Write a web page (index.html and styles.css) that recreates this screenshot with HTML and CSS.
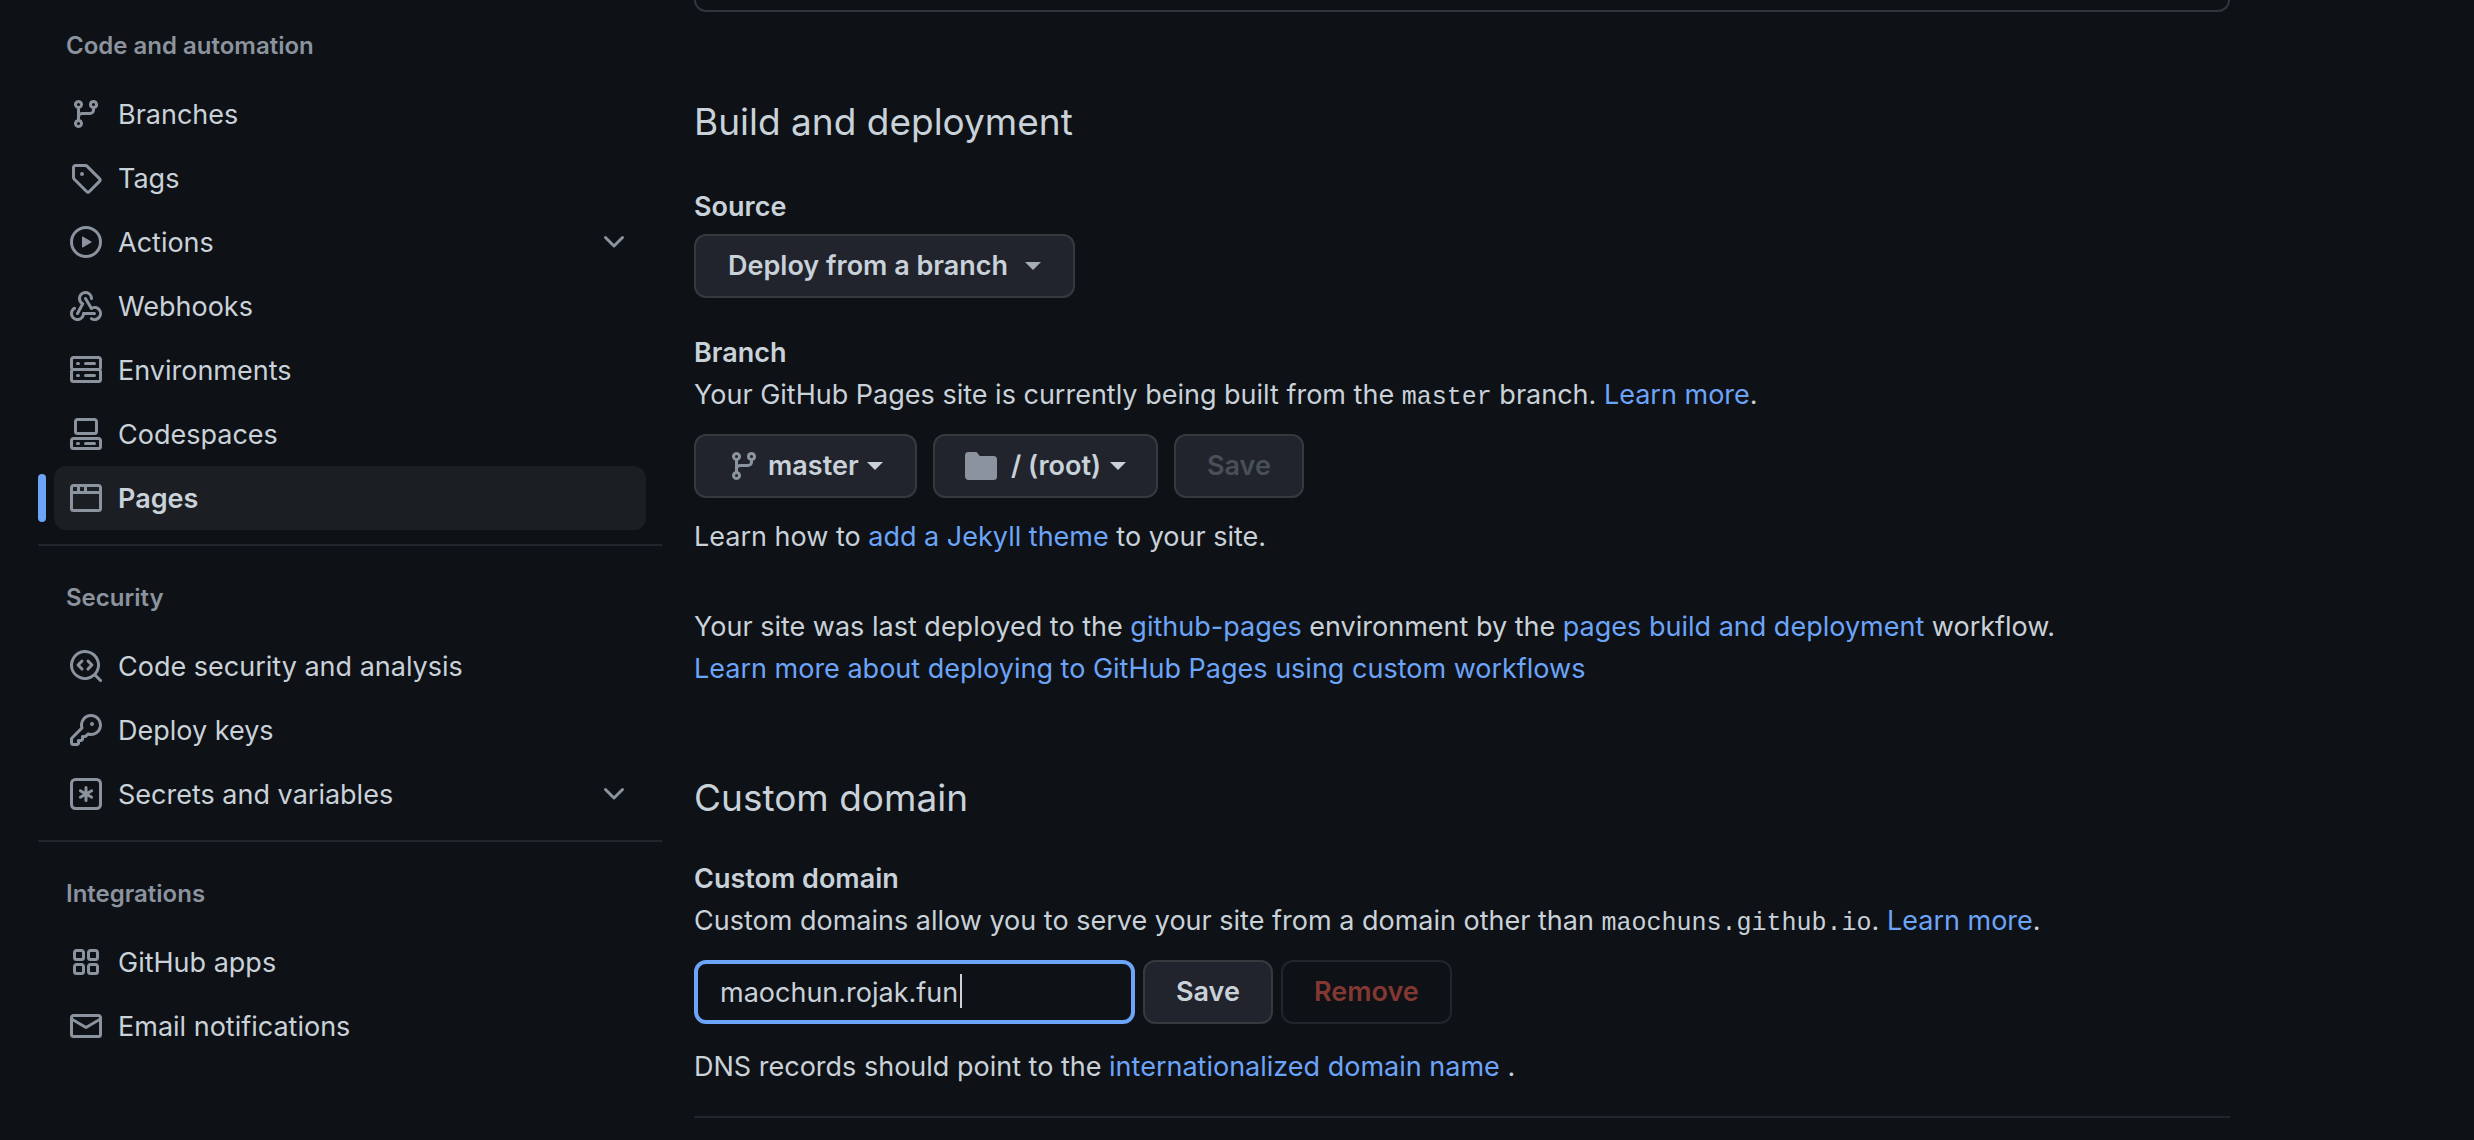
FILE: index.html
```html
<!DOCTYPE html>
<html lang="en">
<head>
<meta charset="utf-8">
<meta name="viewport" content="width=device-width, initial-scale=1">
<title>Pages settings</title>
<link rel="stylesheet" href="styles.css">
</head>
<body>
<svg class="sprite" aria-hidden="true">
  <symbol id="git-branch" viewBox="0 0 16 16"><path d="M9.5 3.25a2.25 2.25 0 1 1 3 2.122V6A2.5 2.5 0 0 1 10 8.5H6a1 1 0 0 0-1 1v1.128a2.251 2.251 0 1 1-1.5 0V5.372a2.25 2.25 0 1 1 1.5 0v1.836A2.493 2.493 0 0 1 6 7h4a1 1 0 0 0 1-1v-.628A2.25 2.25 0 0 1 9.5 3.25Zm-6 0a.75.75 0 1 0 1.5 0 .75.75 0 0 0-1.5 0Zm8.25-.75a.75.75 0 1 0 0 1.5.75.75 0 0 0 0-1.5ZM4.25 12a.75.75 0 1 0 0 1.5.75.75 0 0 0 0-1.5Z"/></symbol>
  <symbol id="tag" viewBox="0 0 16 16"><path d="M1 7.775V2.75C1 1.784 1.784 1 2.75 1h5.025c.464 0 .91.184 1.238.513l6.25 6.25a1.75 1.75 0 0 1 0 2.474l-5.026 5.026a1.75 1.75 0 0 1-2.474 0l-6.25-6.25A1.752 1.752 0 0 1 1 7.775Zm1.5 0c0 .066.026.13.073.177l6.25 6.25a.25.25 0 0 0 .354 0l5.025-5.025a.25.25 0 0 0 0-.354l-6.25-6.25a.25.25 0 0 0-.177-.073H2.75a.25.25 0 0 0-.25.25ZM6 5a1 1 0 1 1 0 2 1 1 0 0 1 0-2Z"/></symbol>
  <symbol id="play" viewBox="0 0 16 16"><path d="M8 0a8 8 0 1 1 0 16A8 8 0 0 1 8 0ZM1.5 8a6.5 6.5 0 1 0 13 0 6.5 6.5 0 0 0-13 0Zm4.879-2.773 4.264 2.559a.25.25 0 0 1 0 .428l-4.264 2.559A.25.25 0 0 1 6 10.559V5.442a.25.25 0 0 1 .379-.215Z"/></symbol>
  <symbol id="webhook" viewBox="0 0 16 16"><path d="M5.5 4.25a2.25 2.25 0 0 1 4.5 0 .75.75 0 0 0 1.5 0 3.75 3.75 0 1 0-6.14 2.889l-2.272 4.258a.75.75 0 0 0 1.324.706L7 7.25a.75.75 0 0 0-.309-1.015A2.25 2.25 0 0 1 5.5 4.25Z"/><path d="M7.364 3.607a.75.75 0 0 1 1.03.257l2.608 4.349a3.75 3.75 0 1 1-.628 6.785.75.75 0 0 1 .752-1.299 2.25 2.25 0 1 0-.033-3.88.75.75 0 0 1-1.03-.256L7.107 4.636a.75.75 0 0 1 .257-1.03Z"/><path d="M2.9 8.776A.75.75 0 0 1 2.625 9.8 2.25 2.25 0 1 0 6 11.75a.75.75 0 0 1 .75-.751h5.5a.75.75 0 0 1 0 1.5H7.425a3.751 3.751 0 1 1-5.55-3.998.75.75 0 0 1 1.024.274Z"/></symbol>
  <symbol id="server" viewBox="0 0 16 16"><path d="M1.75 1h12.5c.966 0 1.75.784 1.75 1.75v4c0 .372-.116.717-.314 1 .198.283.314.628.314 1v4a1.75 1.75 0 0 1-1.75 1.75H1.75A1.75 1.75 0 0 1 0 12.75v-4c0-.358.109-.707.314-1a1.739 1.739 0 0 1-.314-1v-4C0 1.784.784 1 1.75 1ZM1.5 2.75v4c0 .138.112.25.25.25h12.5a.25.25 0 0 0 .25-.25v-4a.25.25 0 0 0-.25-.25H1.75a.25.25 0 0 0-.25.25Zm.25 5.75a.25.25 0 0 0-.25.25v4c0 .138.112.25.25.25h12.5a.25.25 0 0 0 .25-.25v-4a.25.25 0 0 0-.25-.25ZM7 4.75A.75.75 0 0 1 7.75 4h4.5a.75.75 0 0 1 0 1.5h-4.5A.75.75 0 0 1 7 4.75ZM7.75 10h4.5a.75.75 0 0 1 0 1.5h-4.5a.75.75 0 0 1 0-1.5ZM3 4.75A.75.75 0 0 1 3.75 4h.5a.75.75 0 0 1 0 1.5h-.5A.75.75 0 0 1 3 4.75ZM3.75 10h.5a.75.75 0 0 1 0 1.5h-.5a.75.75 0 0 1 0-1.5Z"/></symbol>
  <symbol id="codespaces" viewBox="0 0 16 16"><path d="M0 11.25c0-.966.784-1.75 1.75-1.75h12.5c.966 0 1.75.784 1.75 1.75v3A1.75 1.75 0 0 1 14.25 16H1.75A1.75 1.75 0 0 1 0 14.25Zm2-9.5C2 .784 2.784 0 3.75 0h8.5C13.216 0 14 .784 14 1.75v5a1.75 1.75 0 0 1-1.75 1.75h-8.5A1.75 1.75 0 0 1 2 6.75Zm1.75-.25a.25.25 0 0 0-.25.25v5c0 .138.112.25.25.25h8.5a.25.25 0 0 0 .25-.25v-5a.25.25 0 0 0-.25-.25Zm-2 9.5a.25.25 0 0 0-.25.25v3c0 .138.112.25.25.25h12.5a.25.25 0 0 0 .25-.25v-3a.25.25 0 0 0-.25-.25Z"/><path d="M7 12.75a.75.75 0 0 1 .75-.75h4.5a.75.75 0 0 1 0 1.5h-4.5a.75.75 0 0 1-.75-.75Zm-4 0a.75.75 0 0 1 .75-.75h.5a.75.75 0 0 1 0 1.5h-.5a.75.75 0 0 1-.75-.75Z"/></symbol>
  <symbol id="browser" viewBox="0 0 16 16"><path d="M0 2.75C0 1.784.784 1 1.75 1h12.5c.966 0 1.75.784 1.75 1.75v10.5A1.75 1.75 0 0 1 14.25 15H1.75A1.75 1.75 0 0 1 0 13.25ZM14.5 6h-13v7.25c0 .138.112.25.25.25h12.5a.25.25 0 0 0 .25-.25Zm-6-3.5v2h6V2.75a.25.25 0 0 0-.25-.25ZM5 2.5v2h2v-2Zm-3.25 0a.25.25 0 0 0-.25.25V4.5h2v-2Z"/></symbol>
  <symbol id="codescan" viewBox="0 0 16 16"><path d="M8.47 4.97a.75.75 0 0 0 0 1.06L9.94 7.5 8.47 8.97a.75.75 0 1 0 1.06 1.06l2-2a.75.75 0 0 0 0-1.06l-2-2a.75.75 0 0 0-1.06 0ZM6.53 6.03a.75.75 0 0 0-1.06-1.06l-2 2a.75.75 0 0 0 0 1.06l2 2a.75.75 0 1 0 1.06-1.06L5.06 7.5l1.47-1.47Z"/><path d="M12.246 13.307a7.501 7.501 0 1 1 1.06-1.06l2.474 2.473a.749.749 0 0 1-.326 1.275.749.749 0 0 1-.734-.215ZM1.5 7.5a6.002 6.002 0 0 0 3.608 5.504 6.002 6.002 0 0 0 6.486-1.117.748.748 0 0 1 .292-.293A6 6 0 1 0 1.5 7.5Z"/></symbol>
  <symbol id="key" viewBox="0 0 16 16"><path d="M10.5 0a5.499 5.499 0 1 1-1.288 10.848l-.932.932a.749.749 0 0 1-.53.22H7v.75a.749.749 0 0 1-.22.53l-.5.5a.749.749 0 0 1-.53.22H5v.75a.749.749 0 0 1-.22.53l-.5.5a.749.749 0 0 1-.53.22h-2A1.75 1.75 0 0 1 0 14.25v-2c0-.199.079-.389.22-.53l4.932-4.932A5.5 5.5 0 0 1 10.5 0Zm-4 5.5c-.001.431.069.86.205 1.269a.75.75 0 0 1-.181.768L1.5 12.56v1.69c0 .138.112.25.25.25h1.69l.06-.06v-1.19a.75.75 0 0 1 .75-.75h1.19l.06-.06v-1.19a.75.75 0 0 1 .75-.75h1.19l1.023-1.025a.75.75 0 0 1 .768-.18A4 4 0 1 0 6.5 5.5ZM11 6a1 1 0 1 1 0-2 1 1 0 0 1 0 2Z"/></symbol>
  <symbol id="asterisk" viewBox="0 0 16 16"><path d="M0 2.75A2.75 2.75 0 0 1 2.75 0h10.5A2.75 2.75 0 0 1 16 2.75v10.5A2.75 2.75 0 0 1 13.25 16H2.750A2.750 2.750 0 0 1 0 13.250ZM2.750 1.500c-.690 0-1.250.560-1.250 1.250v10.500c0 .690.560 1.250 1.250 1.250h10.500c.690 0 1.250-.560 1.250-1.250V2.750c0-.690-.560-1.250-1.250-1.250Z"/><path d="M8 4a.75.75 0 0 1 .75.75V6.7l1.69-.975a.75.75 0 0 1 .75 1.3L9.5 8l1.69.976a.75.75 0 0 1-.75 1.298L8.75 9.3v1.951a.75.75 0 0 1-1.5 0V9.299l-1.69.976a.75.75 0 0 1-.75-1.3L6.5 8l-1.69-.975a.75.75 0 0 1 .75-1.3l1.69.976V4.75A.75.75 0 0 1 8 4Z"/></symbol>
  <symbol id="apps" viewBox="0 0 16 16"><path d="M1.5 3.25c0-.966.784-1.75 1.75-1.75h2.5c.966 0 1.75.784 1.75 1.75v2.5A1.75 1.75 0 0 1 5.75 7.5h-2.5A1.75 1.75 0 0 1 1.5 5.75Zm7 0c0-.966.784-1.75 1.75-1.75h2.5c.966 0 1.75.784 1.75 1.75v2.5a1.75 1.75 0 0 1-1.75 1.75h-2.5A1.75 1.75 0 0 1 8.5 5.75Zm-7 7c0-.966.784-1.75 1.75-1.75h2.5c.966 0 1.75.784 1.75 1.75v2.5a1.75 1.75 0 0 1-1.75 1.75h-2.5a1.75 1.75 0 0 1-1.75-1.75Zm7 0c0-.966.784-1.75 1.75-1.75h2.5c.966 0 1.75.784 1.75 1.75v2.5a1.75 1.75 0 0 1-1.75 1.75h-2.5a1.75 1.75 0 0 1-1.75-1.75ZM3.25 3a.25.25 0 0 0-.25.25v2.5c0 .138.112.25.25.25h2.5A.25.25 0 0 0 6 5.75v-2.5A.25.25 0 0 0 5.75 3Zm7 0a.25.25 0 0 0-.25.25v2.5c0 .138.112.25.25.25h2.5a.25.25 0 0 0 .25-.25v-2.5a.25.25 0 0 0-.25-.25Zm-7 7a.25.25 0 0 0-.25.25v2.5c0 .138.112.25.25.25h2.5a.25.25 0 0 0 .25-.25v-2.5a.25.25 0 0 0-.25-.25Zm7 0a.25.25 0 0 0-.25.25v2.5c0 .138.112.25.25.25h2.5a.25.25 0 0 0 .25-.25v-2.5a.25.25 0 0 0-.25-.25Z"/></symbol>
  <symbol id="mail" viewBox="0 0 16 16"><path d="M1.75 2h12.5c.966 0 1.75.784 1.75 1.75v8.5A1.75 1.75 0 0 1 14.25 14H1.75A1.75 1.75 0 0 1 0 12.25v-8.5C0 2.784.784 2 1.75 2ZM1.5 12.251c0 .138.112.25.25.25h12.5a.25.25 0 0 0 .25-.25V5.809L8.38 9.397a.75.75 0 0 1-.76 0L1.5 5.809v6.442Zm13-8.181v-.32a.25.25 0 0 0-.25-.25H1.75a.25.25 0 0 0-.25.25v.32L8 7.88Z"/></symbol>
  <symbol id="chevron" viewBox="0 0 16 16"><path d="M12.78 5.22a.749.749 0 0 1 0 1.06l-4.25 4.25a.749.749 0 0 1-1.06 0L3.22 6.28a.749.749 0 1 1 1.06-1.06L8 8.939l3.72-3.719a.749.749 0 0 1 1.06 0Z"/></symbol>
  <symbol id="folder" viewBox="0 0 16 16"><path d="M1.75 1A1.75 1.75 0 0 0 0 2.75v10.5C0 14.216.784 15 1.75 15h12.5A1.75 1.75 0 0 0 16 13.25v-8.5A1.75 1.75 0 0 0 14.25 3H7.5a.25.25 0 0 1-.2-.1l-.9-1.2C6.07 1.26 5.55 1 5 1H1.75Z"/></symbol>
  <symbol id="caret" viewBox="0 0 16 8"><path d="M0 0h16L8 8Z"/></symbol>
</svg>

<div class="layout">
  <nav class="sidebar" aria-label="Repository settings">
    <section class="group">
      <h2 class="group-title">Code and automation</h2>
      <ul class="menu">
        <li><a class="item" href="#"><svg class="icon"><use href="#git-branch"/></svg><span class="item-label">Branches</span></a></li>
        <li><a class="item" href="#"><svg class="icon"><use href="#tag"/></svg><span class="item-label">Tags</span></a></li>
        <li><button class="item" type="button"><svg class="icon"><use href="#play"/></svg><span class="item-label">Actions</span><svg class="icon chevron"><use href="#chevron"/></svg></button></li>
        <li><a class="item" href="#"><svg class="icon"><use href="#webhook"/></svg><span class="item-label">Webhooks</span></a></li>
        <li><a class="item" href="#"><svg class="icon"><use href="#server"/></svg><span class="item-label">Environments</span></a></li>
        <li><a class="item" href="#"><svg class="icon"><use href="#codespaces"/></svg><span class="item-label">Codespaces</span></a></li>
        <li class="current"><a class="item" href="#" aria-current="page"><svg class="icon"><use href="#browser"/></svg><span class="item-label">Pages</span></a></li>
      </ul>
    </section>
    <section class="group">
      <h2 class="group-title">Security</h2>
      <ul class="menu">
        <li><a class="item" href="#"><svg class="icon"><use href="#codescan"/></svg><span class="item-label">Code security and analysis</span></a></li>
        <li><a class="item" href="#"><svg class="icon"><use href="#key"/></svg><span class="item-label">Deploy keys</span></a></li>
        <li><button class="item" type="button"><svg class="icon"><use href="#asterisk"/></svg><span class="item-label">Secrets and variables</span><svg class="icon chevron"><use href="#chevron"/></svg></button></li>
      </ul>
    </section>
    <section class="group">
      <h2 class="group-title">Integrations</h2>
      <ul class="menu">
        <li><a class="item" href="#"><svg class="icon"><use href="#apps"/></svg><span class="item-label">GitHub apps</span></a></li>
        <li><a class="item" href="#"><svg class="icon"><use href="#mail"/></svg><span class="item-label">Email notifications</span></a></li>
      </ul>
    </section>
  </nav>

  <main class="content">
    <div class="site-card"></div>

    <section class="section">
      <h2 class="title">Build and deployment</h2>
      <label class="label" for="source">Source</label>
      <div class="row">
        <div class="btn picker source">
          <select id="source"><option>Deploy from a branch</option></select>
          <svg class="caret"><use href="#caret"/></svg>
        </div>
      </div>

      <h3 class="label branch-label">Branch</h3>
      <p>Your GitHub Pages site is currently being built from the <code>master</code> branch. <a href="#">Learn more</a>.</p>
      <form class="row branch-row">
        <div class="btn picker">
          <svg class="icon"><use href="#git-branch"/></svg>
          <select aria-label="Branch"><option>master</option></select>
          <svg class="caret"><use href="#caret"/></svg>
        </div>
        <div class="btn picker folder">
          <svg class="icon"><use href="#folder"/></svg>
          <select aria-label="Folder"><option>/ (root)</option></select>
          <svg class="caret"><use href="#caret"/></svg>
        </div>
        <button class="btn" type="submit" disabled>Save</button>
      </form>
      <p>Learn how to <a href="#">add a Jekyll theme</a> to your site.</p>
      <p class="deployed">Your site was last deployed to the <a href="#">github-pages</a> environment by the <a href="#">pages build and deployment</a> workflow.<br><a href="#">Learn more about deploying to GitHub Pages using custom workflows</a></p>
    </section>

    <section class="section domain-section">
      <h2 class="title">Custom domain</h2>
      <label class="label" for="domain">Custom domain</label>
      <p>Custom domains allow you to serve your site from a domain other than <code>maochuns.github.io</code>. <a href="#">Learn more</a>.</p>
      <form class="row domain-row">
        <div class="field">
          <input id="domain" type="text" value="maochun.rojak.fun">
          <span class="cursor"></span>
        </div>
        <button class="btn" type="submit">Save</button>
        <button class="btn danger" type="button" disabled>Remove</button>
      </form>
      <p>DNS records should point to the <a href="#">internationalized domain name</a> .</p>
      <hr>
    </section>
  </main>
</div>
</body>
</html>
```
FILE: styles.css
```css
:root {
  --bg: #0e1116;
  --fg: #c9d1d9;
  --muted: #8b949e;
  --link: #6ca4f8;
  --line: #21262d;
  --btn: #21242c;
  --btn-line: #363a3f;
}

* { box-sizing: border-box; }

body {
  margin: 0;
  background: var(--bg);
  color: var(--fg);
  font: 27px/42px Inter, "Liberation Sans", sans-serif;
}

h2, h3, p, ul { margin: 0; padding: 0; }
ul { list-style: none; }
a { color: var(--link); text-decoration: none; }
button, select, input { font: inherit; color: inherit; }
code { font: 25px/30px "Liberation Mono", monospace; }

.sprite { display: none; }

.icon {
  flex: none;
  width: 32px;
  height: 32px;
  fill: var(--muted);
}

.layout {
  display: grid;
  grid-template-columns: 624px minmax(0, 1fr);
  gap: 32px;
  padding: 0 244px 0 38px;
}

/* Sidebar */
.group { padding: 34px 16px 14px; }
.group:first-child { padding-top: 28px; }
.group + .group { border-top: 2px solid var(--line); }

.group-title {
  padding: 0 12px;
  margin-bottom: 18px;
  color: var(--muted);
  font-size: 24px;
  font-weight: 600;
  line-height: 36px;
}

.item {
  display: flex;
  align-items: center;
  gap: 16px;
  width: 100%;
  height: 64px;
  padding: 0 16px;
  border: 0;
  border-radius: 12px;
  background: none;
  color: var(--fg);
  text-align: left;
}

.item-label { padding-top: 2px; }
.chevron { margin-left: auto; }
.current { position: relative; }
.current .item { background: #1b1f24; font-weight: 600; }
.current::before {
  content: "";
  position: absolute;
  left: -16px;
  top: 8px;
  width: 8px;
  height: 48px;
  border-radius: 4px;
  background: var(--link);
}

/* Main column */
.site-card {
  height: 12px;
  border: 2px solid #30363d;
  border-top: 0;
  border-radius: 0 0 12px 12px;
}

.section { padding-top: 80px; }
.domain-section { padding-top: 78px; }

.title {
  margin-bottom: 34px;
  font-size: 37px;
  font-weight: 400;
  line-height: 60px;
}
.domain-section .title { margin-bottom: 30px; }

.label {
  display: block;
  font-size: 27px;
  font-weight: 600;
}
.branch-label { margin-top: 34px; }

.row { display: flex; margin-top: 6px; }
.branch-row { gap: 16px; margin: 18px 0; }
.domain-row { gap: 8px; margin: 18px 0 22px; }
.deployed { margin-top: 48px; }

.btn {
  display: flex;
  align-items: center;
  height: 64px;
  padding: 0 31px;
  border: 2px solid var(--btn-line);
  border-radius: 12px;
  background: var(--btn);
  font-weight: 600;
}
.btn:disabled { color: #484f58; }
.danger { border-color: var(--line); background: none; }
.danger:disabled { color: #843832; }

.picker { gap: 8px; padding: 0 32px; }
.picker.source { gap: 16px; }
.picker.source .caret { fill: #a5adb5; }
.picker.folder { padding: 0 30px; }
.picker.folder .icon { margin-right: 6px; }
.picker select {
  appearance: none;
  padding: 0;
  border: 0;
  background: none;
}
.caret { width: 16px; height: 8px; fill: var(--fg); }

.field { position: relative; width: 441px; }
.field input {
  width: 100%;
  height: 64px;
  padding: 0 22px;
  border: 4px solid var(--link);
  border-radius: 12px;
  outline: 0;
  background: var(--bg);
}
.cursor {
  position: absolute;
  left: 266px;
  top: 14px;
  width: 2px;
  height: 34px;
  background: var(--fg);
}

hr {
  margin: 28px 0 22px;
  border: 0;
  border-top: 2px solid var(--line);
}
```
